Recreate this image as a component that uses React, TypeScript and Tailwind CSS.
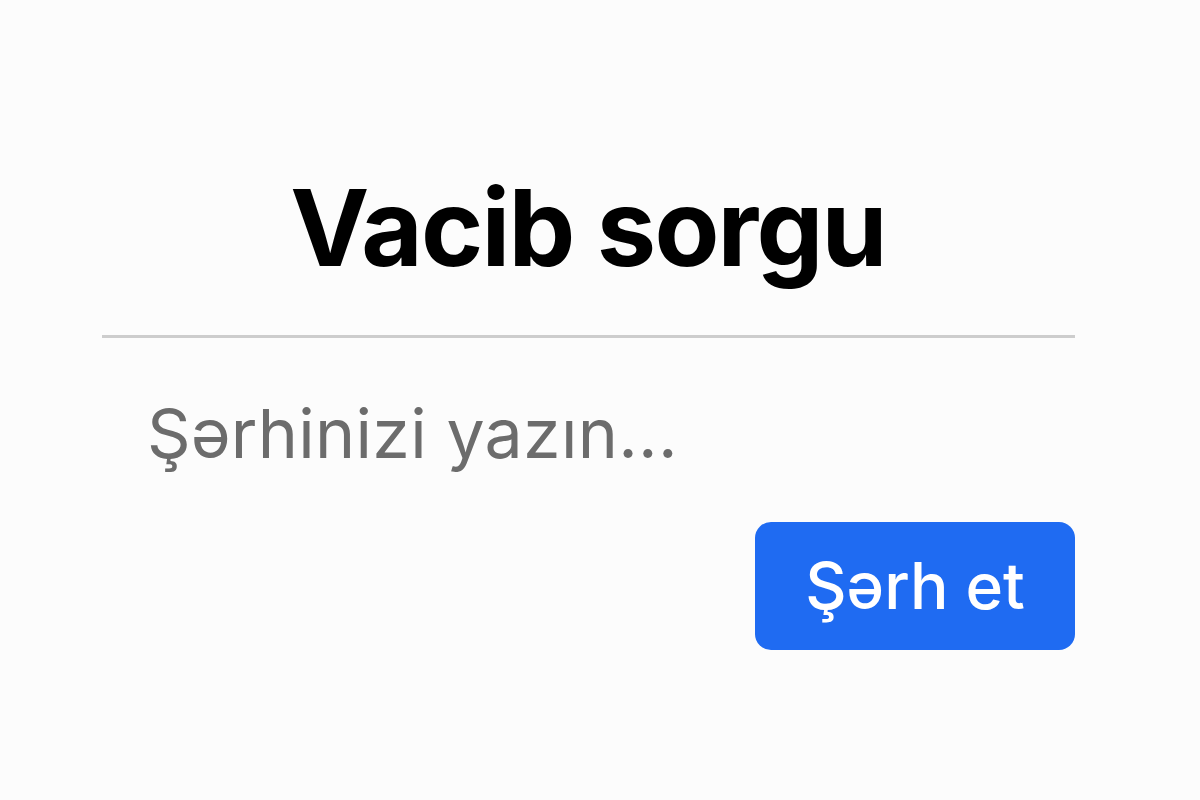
export default function App() {
  return (
    <div className="w-[1200px] h-[800px] bg-[#fcfcfc] flex flex-col" style={{ fontFamily: "Inter, 'Noto Sans', sans-serif" }}>
      <div className="flex justify-center pt-[168px]">
        <h1 className="text-[106px] leading-[120px] font-bold text-black tracking-[-1.8px] ml-[-24px]">Vacib sorgu</h1>
      </div>
      <div className="mx-[102px] w-[973px] mt-[47px] h-[3px] bg-[#cdcdcd]" />
      <div className="pl-[147px] mt-[55px] text-[68px] leading-[80px] text-[#6c6c6c] tracking-[0.3px]">Şərhinizi yazın...</div>
      <div className="flex justify-end pr-[125px] mt-[49px]">
        <button className="w-[320px] h-[128px] rounded-[16px] bg-[#1f6bf2] text-white text-[64px] font-medium flex items-center justify-center">Şərh et</button>
      </div>
    </div>
  );
}
